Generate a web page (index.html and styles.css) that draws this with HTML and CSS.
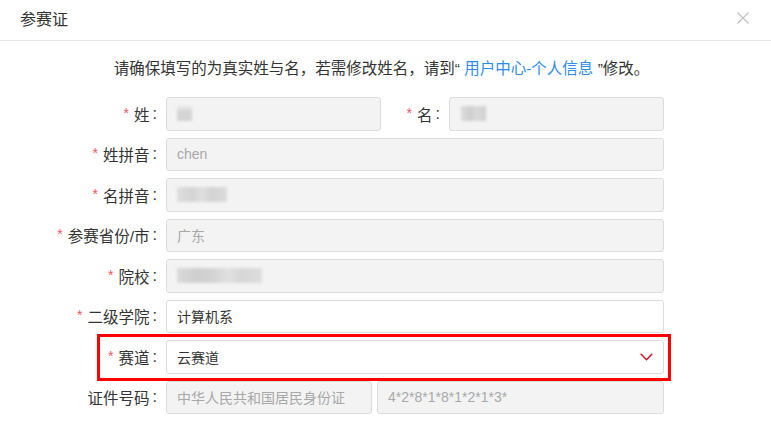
FILE: index.html
```html
<!DOCTYPE html>
<html lang="zh-CN">
<head>
<meta charset="utf-8">
<title>参赛证</title>
<link rel="stylesheet" href="styles.css">
</head>
<body>
<div class="dialog">
  <div class="dialog-header">
    <span class="dialog-title">参赛证</span>
    <svg class="close" width="12" height="12" viewBox="0 0 12 12"><path d="M0.5 0.5L11.5 11.5M11.5 0.5L0.5 11.5" stroke="#c0c0c0" stroke-width="1.1" fill="none"/></svg>
  </div>
  <p class="notice">请确保填写的为真实姓与名，若需修改姓名，请到“ <a class="link">用户中心-个人信息</a> ”修改。</p>
  <form class="form">
    <div class="row row-names">
      <label class="label"><i>*</i>姓<b>:</b></label>
      <div class="input disabled"><span class="blur b1"></span></div>
      <label class="label"><i>*</i>名<b>:</b></label>
      <div class="input disabled"><span class="blur b2"></span></div>
    </div>
    <div class="row">
      <label class="label"><i>*</i>姓拼音<b>:</b></label>
      <div class="input disabled">chen</div>
    </div>
    <div class="row">
      <label class="label"><i>*</i>名拼音<b>:</b></label>
      <div class="input disabled"><span class="blur b3"></span></div>
    </div>
    <div class="row">
      <label class="label"><i>*</i>参赛省份/市<b>:</b></label>
      <div class="input disabled">广东</div>
    </div>
    <div class="row">
      <label class="label"><i>*</i>院校<b>:</b></label>
      <div class="input disabled"><span class="blur b4"></span></div>
    </div>
    <div class="row">
      <label class="label"><i>*</i>二级学院<b>:</b></label>
      <div class="input">计算机系</div>
    </div>
    <div class="row row-track">
      <label class="label"><i>*</i>赛道<b>:</b></label>
      <div class="input select">云赛道
        <svg class="chev" width="13" height="8" viewBox="0 0 13 8"><path d="M0.7 0.7L6.5 6.7L12.3 0.7" stroke="#d9001b" stroke-width="1.3" fill="none"/></svg>
      </div>
      <div class="highlight"></div>
    </div>
    <div class="row row-id">
      <label class="label">证件号码<b>:</b></label>
      <div class="input disabled">中华人民共和国居民身份证</div>
      <div class="input disabled id-num">4*2*8*1*8*1*2*1*3*</div>
    </div>
  </form>
</div>
</body>
</html>
```

FILE: styles.css
```css
* { box-sizing: border-box; }
html, body { margin: 0; padding: 0; background: #fff; }
body {
  font-family: "Liberation Sans", "Noto Sans CJK SC", sans-serif;
  color: #333;
  width: 771px;
  height: 427px;
  overflow: hidden;
}
.dialog { width: 771px; }
.dialog-header {
  height: 41px;
  border-bottom: 1px solid #e6e6e6;
  display: flex;
  align-items: center;
  justify-content: space-between;
  padding: 0 22px 5px 20px;
}
.dialog-title { font-size: 16px; color: #333; }
.close { display: block; }
.notice {
  margin: 14px 0 0;
  padding-right: 8px;
  height: 28px;
  line-height: 28px;
  text-align: center;
  font-size: 15.5px;
  color: #333;
}
.link { color: #2d8cf0; }
.form {
  margin-top: 14px;
  display: flex;
  flex-direction: column;
  gap: 7px;
}
.row {
  display: grid;
  grid-template-columns: 166px 498px;
  height: 33.5px;
  position: relative;
}
.row-names { grid-template-columns: 166px 215px 68px 215px; }
.row-id { grid-template-columns: 166px 206px 292px; }
.id-num { margin-left: 5px; }
.label {
  display: flex;
  align-items: center;
  justify-content: flex-end;
  padding-right: 9px;
  font-size: 15.5px;
  color: #333;
  white-space: nowrap;
}
.label b {
  font-weight: normal;
  margin-left: 3px;
  font-size: 16px;
}
.label i {
  font-style: normal;
  color: #f5565b;
  font-size: 14px;
  margin-right: 5px;
  position: relative;
  top: -1px;
}
.input {
  display: flex;
  align-items: center;
  border: 1px solid #dcdcdc;
  border-radius: 3px;
  padding: 0 10px;
  font-size: 14px;
  color: #333;
  background: #fff;
}
.input.disabled { background: #f3f3f3; color: #a8a8a8; }
.select { justify-content: space-between; padding-right: 10px; }
.chev { display: block; }
.blur {
  display: inline-block;
  height: 15px;
  filter: blur(1.5px);
  opacity: 0.85;
}
.b1 { width: 15px; background: linear-gradient(#e2e2e2 0 30%, #cfcfcf 30%); }
.b2 { width: 25px; margin-left: 1px; background: linear-gradient(90deg, #d8d8d8, #c8c8c8 40%, #d6d6d6 60%, #cacaca); }
.b3 { width: 50px; background: linear-gradient(90deg, #dadada, #cfcfcf 30%, #dcdcdc 50%, #cdcdcd 70%, #d8d8d8); }
.b4 { width: 85px; background: linear-gradient(90deg, #d6d6d6, #c8c8c8 25%, #d0d0d0 45%, #dedede 60%, #d2d2d2 75%, #dadada); }
.highlight {
  position: absolute;
  left: 97px;
  top: -6.5px;
  width: 574px;
  height: 47px;
  border: 3px solid #f00;
  pointer-events: none;
}
```
